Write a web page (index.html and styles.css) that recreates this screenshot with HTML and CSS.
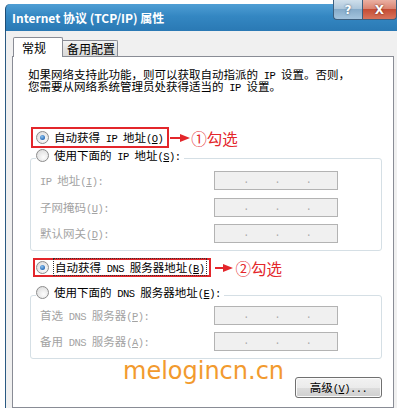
FILE: index.html
```html
<!DOCTYPE html>
<html lang="zh-CN">
<head>
<meta charset="utf-8">
<title>Internet 协议 (TCP/IP) 属性</title>
<link rel="stylesheet" href="styles.css">
</head>
<body>
<div class="window">
  <div class="titlebar">
    <span class="title">Internet 协议 (TCP/IP) 属性</span>
    <div class="caption">
      <span class="cbtn help">?</span>
      <span class="cbtn close">X</span>
    </div>
  </div>
  <div class="client">
    <div class="tabs">
      <div class="tab tab-active">常规</div>
      <div class="tab tab-alt">备用配置</div>
    </div>
    <div class="panel">
      <p class="intro">如果网络支持此功能，则可以获取自动指派的<span class="en"> IP </span>设置。否则，<br>您需要从网络系统管理员处获得适当的<span class="en"> IP </span>设置。</p>

      <div class="opt-row opt-ip">
        <div class="hl hl-ip"><span class="radio checked"></span><span class="rtext">自动获得<span class="en"> IP </span>地址<span class="en">(<u>O</u>)</span></span></div>
        <svg class="arrow arrow-ip" width="20" height="10" viewBox="0 0 20 10"><line x1="0" y1="5" x2="12" y2="5" stroke="#e3262b" stroke-width="2"/><polygon points="10,1 20,5 10,9" fill="#e3262b"/></svg>
        <span class="note">①勾选</span>
      </div>

      <fieldset class="group group-ip">
        <legend class="legend legend-ip"><span class="legend-in"><span class="radio"></span><span class="rtext">使用下面的<span class="en"> IP </span>地址<span class="en">(<u>S</u>):</span></span></span></legend>
        <div class="rows rows-ip">
          <div class="row"><span class="label"><span class="en">IP </span>地址<span class="en">(<u>I</u>):</span></span><span class="ipbox"><span>.</span><span>.</span><span>.</span></span></div>
          <div class="row"><span class="label">子网掩码<span class="en">(<u>U</u>):</span></span><span class="ipbox"><span>.</span><span>.</span><span>.</span></span></div>
          <div class="row"><span class="label">默认网关<span class="en">(<u>D</u>):</span></span><span class="ipbox"><span>.</span><span>.</span><span>.</span></span></div>
        </div>
      </fieldset>

      <div class="opt-row opt-dns">
        <div class="hl hl-dns"><span class="radio checked"></span><span class="rtext"><span class="focus">自动获得<span class="en"> DNS </span>服务器地址<span class="en">(<u>B</u>)</span></span></span></div>
        <svg class="arrow arrow-dns" width="18" height="10" viewBox="0 0 18 10"><line x1="0" y1="5" x2="10" y2="5" stroke="#e3262b" stroke-width="2"/><polygon points="8,1 18,5 8,9" fill="#e3262b"/></svg>
        <span class="note note-dns">②勾选</span>
      </div>

      <fieldset class="group group-dns">
        <legend class="legend legend-dns"><span class="legend-in"><span class="radio"></span><span class="rtext">使用下面的<span class="en"> DNS </span>服务器地址<span class="en">(<u>E</u>):</span></span></span></legend>
        <div class="rows rows-dns">
          <div class="row"><span class="label">首选<span class="en"> DNS </span>服务器<span class="en">(<u>P</u>):</span></span><span class="ipbox"><span>.</span><span>.</span><span>.</span></span></div>
          <div class="row"><span class="label">备用<span class="en"> DNS </span>服务器<span class="en">(<u>A</u>):</span></span><span class="ipbox"><span>.</span><span>.</span><span>.</span></span></div>
        </div>
      </fieldset>

      <div class="footer">
        <span class="watermark">melogincn.cn</span>
        <button class="btn" type="button">高级<span class="en">(<u>V</u>)...</span></button>
      </div>
    </div>
  </div>
</div>
</body>
</html>
```

FILE: styles.css
```css
* { box-sizing: border-box; }

html, body {
  margin: 0;
  padding: 0;
}

body {
  width: 403px;
  height: 408px;
  overflow: hidden;
  background: #ffffff;
  font-family: "Noto Sans CJK SC", "Noto Sans", sans-serif;
  font-size: 11.5px;
  color: #000000;
}

.en {
  font-family: "Liberation Mono", monospace;
  font-size: 10.5px;
  letter-spacing: -0.54px;
  line-height: 0;
}

u { text-decoration: underline; }

.window {
  margin-left: 5px;
  width: 392px;
}

/* ---------- title bar ---------- */
.titlebar {
  margin-top: 4px;
  height: 27px;
  display: flex;
  align-items: center;
  padding-left: 6px;
  background: linear-gradient(#4f9ed4, #3487c2 45%, #2a79b4);
  border-left: 1px solid #1e4d75;
  border-top-left-radius: 5px;
}

.title {
  color: #ffffff;
  font-weight: 700;
  font-size: 12px;
  line-height: 14px;
  white-space: nowrap;
}

.caption {
  margin-left: auto;
  align-self: flex-start;
  margin-top: -4px;
  display: flex;
}

.cbtn {
  height: 20px;
  display: flex;
  align-items: center;
  justify-content: center;
  font-family: "DejaVu Sans", sans-serif;
  font-weight: 700;
  font-size: 12px;
  color: #ffffff;
  border: 1px solid #3d5f7e;
  border-top: none;
}

.help {
  width: 29px;
  border-right: none;
  border-bottom-left-radius: 4px;
  background: linear-gradient(#cfdfeb, #aac4d9 50%, #86abc9 50%, #a4c4de);
  text-shadow: 0 0 2px #2e4d69;
}

.close {
  width: 35px;
  border-bottom-right-radius: 4px;
  background: linear-gradient(#eab0a2, #d9806d 50%, #c54d35 50%, #d8745c);
  text-shadow: 0 0 2px #5a1a10;
}

/* ---------- client ---------- */
.client {
  height: 377px;
  background: #f0f0f0;
  border-left: 1px solid #2a5a82;
  padding: 6px 3px 0 6px;
  display: flex;
  flex-direction: column;
}

.tabs {
  display: flex;
  align-items: flex-start;
  height: 19px;
  padding-left: 1px;
  position: relative;
  z-index: 1;
}

.tab {
  font-size: 12px;
  line-height: 14px;
  display: flex;
  align-items: center;
  border: 1px solid #898c95;
  border-bottom: none;
  white-space: nowrap;
}

.tab-active {
  height: 20px;
  width: 50px;
  padding-left: 8px;
  background: #ffffff;
  border-radius: 2px 2px 0 0;
}

.tab-alt {
  height: 16px;
  width: 55px;
  margin-top: 3px;
  padding-left: 4px;
  border-left: none;
  border-radius: 0 2px 0 0;
  background: linear-gradient(#f4f4f4, #e3e3e3 50%, #d9d9d9);
}

.panel {
  flex: 1;
  background: #ffffff;
  border: 1px solid #898c95;
  padding-top: 11px;
}

.intro {
  margin: 0 0 0 15px;
  line-height: 12px;
  white-space: nowrap;
}

/* ---------- radio options ---------- */
.opt-row {
  display: flex;
  align-items: center;
}

.opt-ip { margin-top: 35px; }
.opt-dns { margin-top: 7px; }

.hl {
  display: flex;
  align-items: center;
  border: 2px solid #e3262b;
  line-height: 13px;
}

.hl-ip {
  margin-left: 18px;
  height: 21px;
  padding: 0 4px 0 3px;
}

.hl-dns {
  margin-left: 20px;
  height: 19px;
  padding: 0 3px 0 1px;
}

.radio {
  flex: none;
  width: 13px;
  height: 13px;
  border-radius: 50%;
  border: 1px solid #8c8c8c;
  background: radial-gradient(circle at 60% 65%, #fdfdfd, #d6d6d6);
  display: flex;
  align-items: center;
  justify-content: center;
}

.radio.checked::after {
  content: "";
  width: 5px;
  height: 5px;
  border-radius: 50%;
  background: radial-gradient(circle at 40% 35%, #8ec4f0, #2a6cb8 70%, #1d4f8c);
}

.rtext {
  margin-left: 5px;
  white-space: nowrap;
  line-height: 13px;
}

.focus {
  outline: 1px dotted #333333;
  padding: 0 1px;
}

.arrow { flex: none; }
.arrow-ip { margin-left: 1px; }
.arrow-dns { margin-left: 4px; }

.note {
  color: #e3262b;
  font-size: 15.5px;
  line-height: 18px;
  margin-left: 1px;
  white-space: nowrap;
}

.note-dns { margin-left: 3px; }

/* ---------- group boxes ---------- */
.group {
  min-width: 0;
  margin: 1px 11px 0 17px;
  border: 1px solid #d5dfe5;
  border-radius: 3px;
  padding: 3px 0 7px 5px;
}

.group-dns {
  margin-top: 9px;
  padding-top: 2px;
}

.legend {
  padding: 0 3px 6px 0;
  line-height: 13px;
}

.legend-dns { padding-bottom: 5px; }

.legend-in {
  display: flex;
  align-items: center;
  height: 13px;
}

.rows {
  display: flex;
  flex-direction: column;
  padding-left: 4px;
}

.rows-ip { gap: 7.5px; }
.rows-dns { gap: 7px; }

.row {
  display: flex;
  align-items: center;
  height: 19px;
  color: #a3a3a3;
}

.label {
  width: 174px;
  white-space: nowrap;
  line-height: 13px;
}

.ipbox {
  width: 124px;
  height: 19px;
  border: 1px solid #b3b3b3;
  background: #f0f0f0;
  display: flex;
  justify-content: space-evenly;
  align-items: center;
  padding-left: 3px;
  color: #a8a8a8;
  font-family: "Liberation Mono", monospace;
  font-size: 10px;
  line-height: 17px;
}

/* ---------- footer ---------- */
.footer {
  display: flex;
  align-items: flex-start;
  margin: 1px 11px 0 17px;
}

.watermark {
  margin-left: 93px;
  color: #f29a2e;
  font-family: "DejaVu Sans", sans-serif;
  font-weight: 400;
  font-size: 24px;
  line-height: 22px;
  white-space: nowrap;
}

.btn {
  margin-left: auto;
  margin-top: 17px;
  width: 87px;
  height: 21px;
  padding: 0;
  border: 1px solid #707070;
  border-radius: 3px;
  background: linear-gradient(#f2f2f2, #ebebeb 50%, #dddddd 50%, #cfcfcf);
  box-shadow: inset 0 0 0 1px #fbfbfb;
  font-family: "Noto Sans CJK SC", sans-serif;
  font-size: 11.5px;
  line-height: 13px;
  color: #000000;
}
```
